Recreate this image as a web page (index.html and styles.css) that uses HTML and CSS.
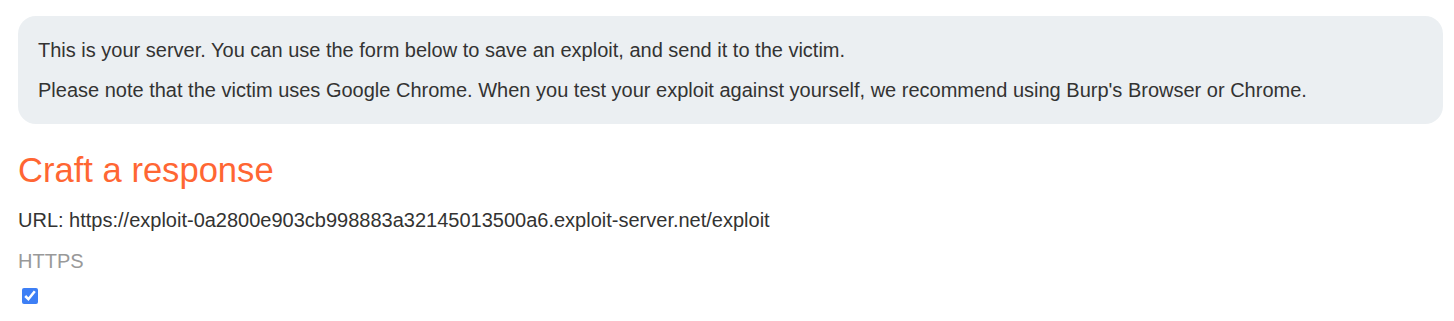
FILE: index.html
```html
<!DOCTYPE html>
<html lang="en">
<head>
  <meta charset="UTF-8" />
  <title>Exploit Server</title>
  <link rel="stylesheet" href="styles.css">
</head>
<body>
  <div class="container">
    <div class="information">
      <p>This is your server. You can use the form below to save an exploit, and send it to the victim.</p>
      <p>Please note that the victim uses Google Chrome. When you test your exploit against yourself, we recommend using Burp's Browser or Chrome.</p>
    </div>

    <h3>Craft a response</h3>
    <form id="feedbackForm" action="/" method="POST">
      <p class="url">URL: https://exploit-0a2800e903cb998883a32145013500a6.exploit-server.net/exploit</p>
      <label for="https">HTTPS</label>
      <input type="checkbox" id="https" name="urlIsHttps" checked />
    </form>
  </div>
</body>
</html>
```

FILE: styles.css
```css
body {
  margin: 0;
  background: #fff;
  color: #333332;
  font-family: "Liberation Sans", Arial, sans-serif;
  font-size: 20px;
}

.container {
  padding: 16px 11px 0 18px;
}

.information {
  background: #ebeff2;
  border-radius: 18px;
  padding: 22px 20px;
}

.information p {
  margin: 0;
  line-height: 24px;
}

.information p + p {
  margin-top: 16px;
}

h3 {
  color: #ff6633;
  font-size: 34.6px;
  font-weight: normal;
  line-height: 40px;
  margin: 26px 0 18px;
}

.url {
  margin: 0 0 17px;
  line-height: 24px;
}

label {
  display: block;
  color: #999;
  line-height: 24px;
}

input[type="checkbox"] {
  display: block;
  width: 16px;
  height: 16px;
  margin: 15px 0 0 4px;
  accent-color: #3d7ff5;
}
```
